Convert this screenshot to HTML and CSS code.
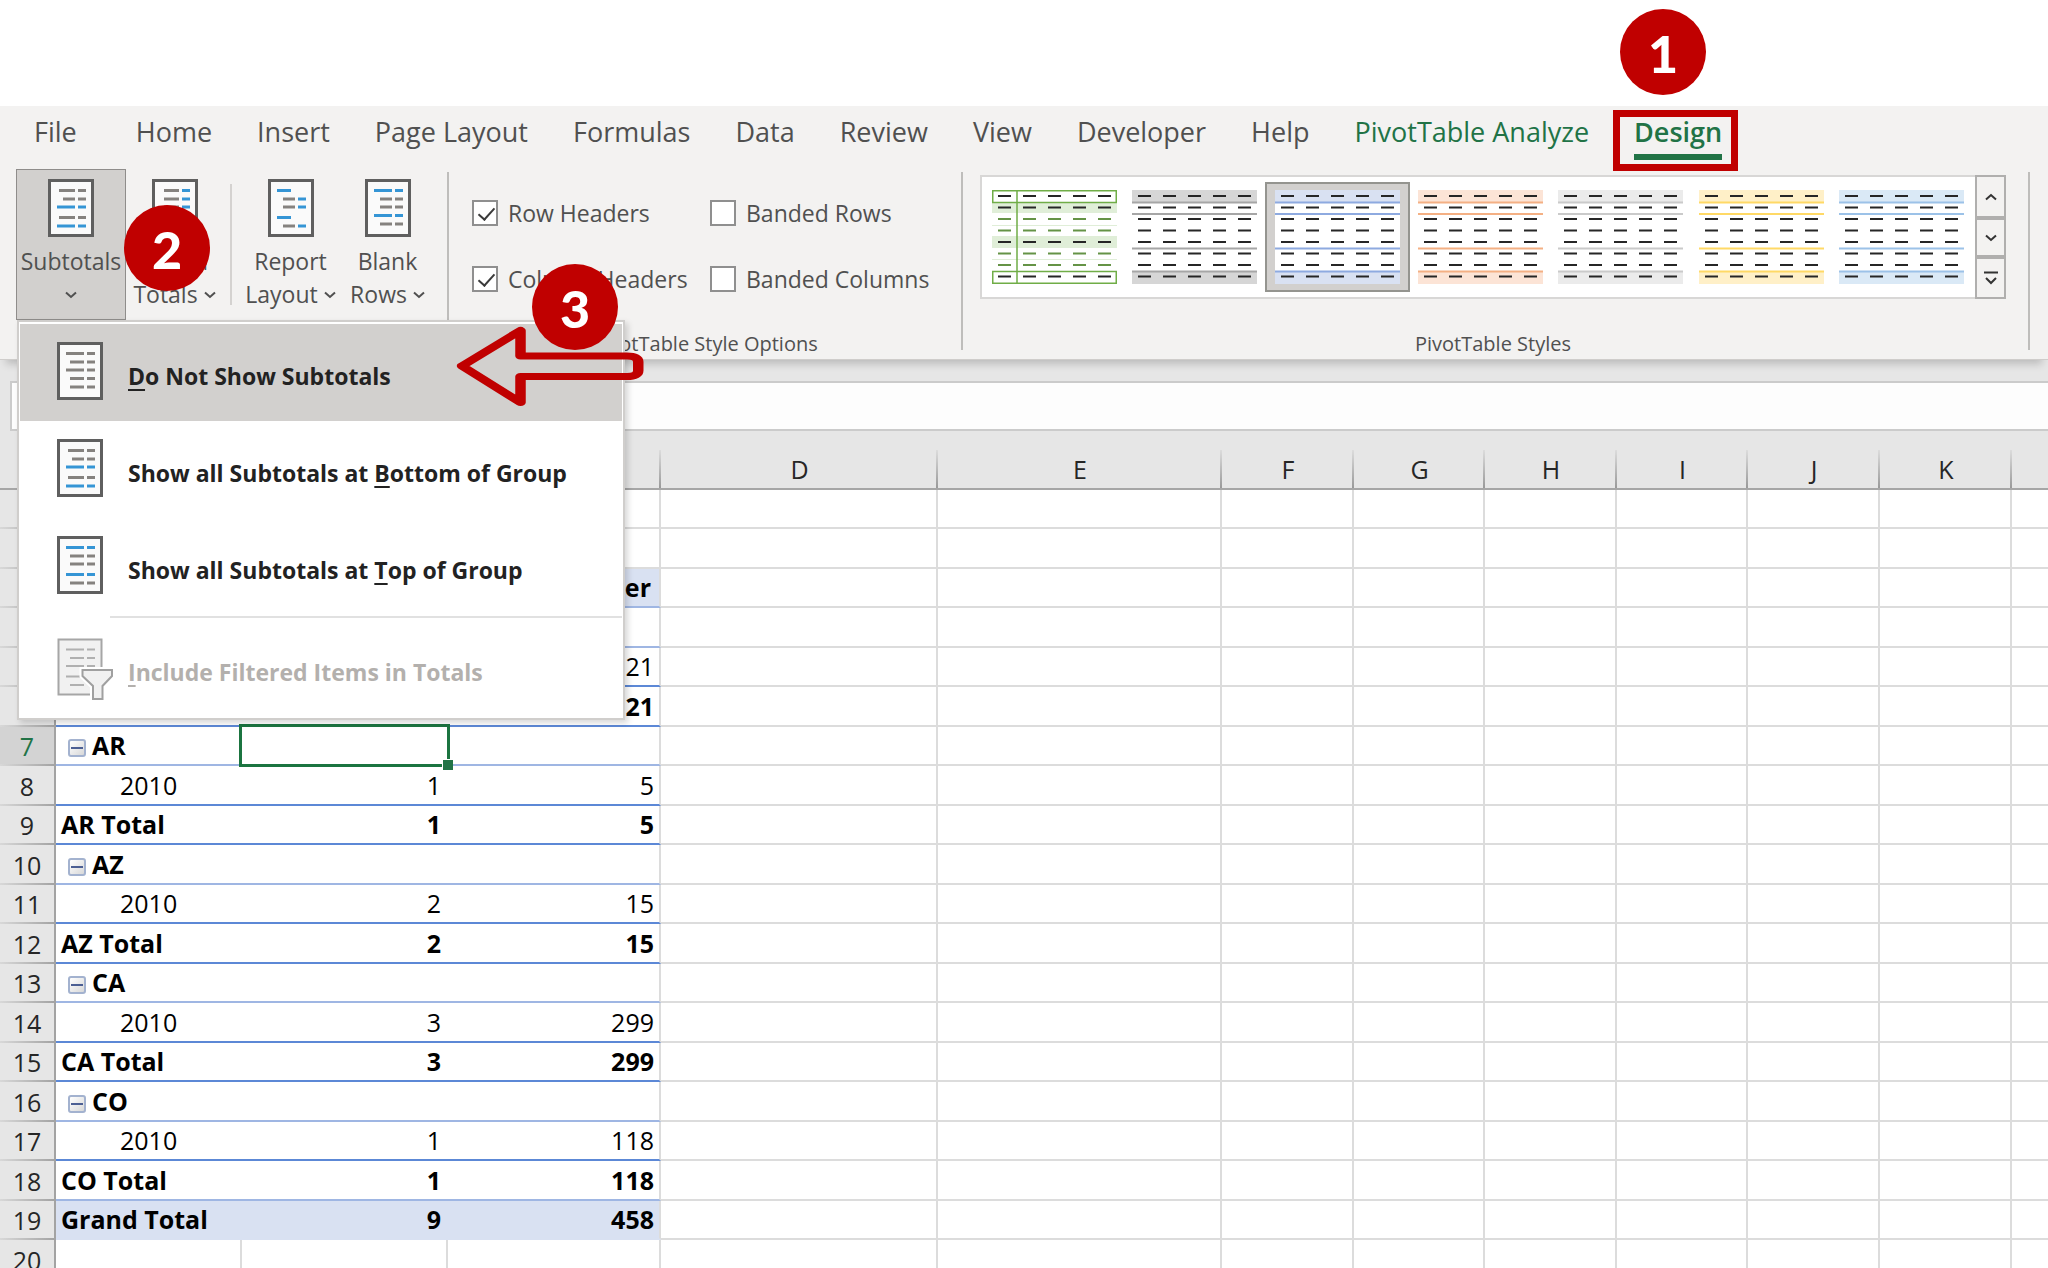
FILE: index.html
```html
<!DOCTYPE html>
<html lang="en">
<head>
<meta charset="utf-8">
<meta name="viewport" content="width=device-width, initial-scale=1">
<title>PivotTable subtotals</title>
<link rel="stylesheet" href="styles.css">
</head>
<body>
<svg class="defs" aria-hidden="true">
  <symbol id="sheet" viewBox="0 0 46 58">
    <rect class="paper" x="1.5" y="1.5" width="43" height="55"/>
  </symbol>
  <symbol id="bottom" viewBox="0 0 46 58">
    <use href="#sheet"/>
    <path class="ink" d="M11 11.500H27M30 11.500H38M15 20H27M30 20H38M11 38.500H27M30 38.500H38"/>
    <path class="blue" d="M9 28H27M30 28H38M9 47H27M30 47H38"/>
  </symbol>
  <symbol id="top" viewBox="0 0 46 58">
    <use href="#sheet"/>
    <path class="ink" d="M13 20H27M30 20H38M13 28H27M30 28H38M13 47H27M30 47H38"/>
    <path class="blue" d="M9 11.500H27M30 11.500H38M9 38.500H27M30 38.500H38"/>
  </symbol>
  <symbol id="none" viewBox="0 0 46 58">
    <use href="#sheet"/>
    <path class="ink" d="M9 11.500H27M30 11.500H38M13 20H27M30 20H38M9 28H27M30 28H38M13 36.500H27M30 36.500H38M13 45H27M30 45H38"/>
  </symbol>
  <symbol id="grand" viewBox="0 0 46 58">
    <use href="#sheet"/>
    <path class="ink" d="M12 11.500H27M12 20H27M12 28H27M12 36.500H27"/>
    <path class="blue" d="M30 11.500H38M30 20H38M30 28H38M30 36.500H38M9 47H38"/>
  </symbol>
  <symbol id="report" viewBox="0 0 46 58">
    <use href="#sheet"/>
    <path class="ink" d="M15 20H27M15 28H27M15 47H27"/>
    <path class="blue" d="M9 11.500H23M30 20H38M30 28H38M9 38.500H23M30 47H38"/>
  </symbol>
  <symbol id="blank" viewBox="0 0 46 58">
    <use href="#sheet"/>
    <path class="ink" d="M15 20H27M30 20H38M15 28H27M30 28H38M15 45H27M30 45H38"/>
    <path class="blue" d="M9 11.500H27M30 11.500H38M9 36.500H27M30 36.500H38"/>
  </symbol>
  <symbol id="filter" viewBox="0 0 56 62">
    <rect x="1.500" y="1.500" width="43" height="55" fill="#f1f1f1" stroke="#a6a6a6" stroke-width="2"/>
    <path d="M9 11.500H27M30 11.500H38M13 20H27M30 20H38M9 28H27M30 28H38M9 38.500H25M13 47H27" stroke="#b0b0b0" stroke-width="2"/>
    <path d="M25.500 32H55V38L45.500 48V61.500H36V48L25.500 38Z" fill="#f1f1f1" stroke="#fff" stroke-width="6"/>
    <path d="M25.500 32H55V38L45.500 48V61H36V48L25.500 38Z" fill="#f1f1f1" stroke="#a0a0a0" stroke-width="2"/>
  </symbol>
  <symbol id="down" viewBox="0 0 12 8"><path d="M1 1.500L6 6L11 1.500" fill="none" stroke="currentColor" stroke-width="2"/></symbol>
  <symbol id="up" viewBox="0 0 12 8"><path d="M1 6.500L6 2L11 6.500" fill="none" stroke="currentColor" stroke-width="2"/></symbol>
  <symbol id="more" viewBox="0 0 14 14"><path d="M0 1.500H14M2 7L7 12L12 7" fill="none" stroke="currentColor" stroke-width="2"/></symbol>
  <symbol id="style" viewBox="0 0 125 94">
    <rect width="125" height="94" fill="#fff"/>
    <path class="band" d="M0 0H125V12H0ZM0 82H125V94H0Z"/>
    <path class="rule" d="M0 12.500H125M0 24H125M0 58.500H125M0 81.500H125"/>
    <path class="dash" d="M6 6H125M6 17.500H125M6 29H125M6 40.500H125M6 52H125M6 63.500H125M6 75H125M6 86.500H125"/>
  </symbol>
  <symbol id="style-green" viewBox="0 0 125 94">
    <path d="M0 13H125V23H0ZM0 46H125V58H0ZM0 35H125V36H0ZM0 69H125V70H0Z" fill="#e0eed8"/>
    <path d="M.75 .75H124.250V12.500H.75ZM.75 81.500H124.250V93.250H.75ZM25 1V93" fill="none" stroke="#70ad47" stroke-width="1.500"/>
    <path class="dash" d="M6 6H125M6 17.500H125M6 52H125M6 86.500H125"/>
    <path class="dash dash-green" d="M6 29H125M6 40.500H125M6 63.500H125M6 75H125"/>
  </symbol>
</svg>

<div class="window">
  <header class="ribbon">
    <nav class="tabs" role="tablist" aria-label="Ribbon">
      <button class="tab tab-file" role="tab">File</button>
      <button class="tab" role="tab">Home</button>
      <button class="tab" role="tab">Insert</button>
      <button class="tab" role="tab">Page Layout</button>
      <button class="tab" role="tab">Formulas</button>
      <button class="tab" role="tab">Data</button>
      <button class="tab" role="tab">Review</button>
      <button class="tab" role="tab">View</button>
      <button class="tab" role="tab">Developer</button>
      <button class="tab" role="tab">Help</button>
      <button class="tab tab-context" role="tab">PivotTable Analyze</button>
      <button class="tab tab-context tab-active" role="tab" aria-selected="true">Design</button>
    </nav>

    <div class="groups">
      <section class="group layout-group">
        <div class="menu-anchor">
          <button class="tool tool-open" aria-expanded="true" aria-haspopup="menu">
            <svg class="page-icon"><use href="#bottom"/></svg>
            <span>Subtotals<br><svg class="chevron"><use href="#down"/></svg></span>
          </button>
          <div class="menu" role="menu">
            <button class="item item-hover" role="menuitem"><svg class="page-icon"><use href="#none"/></svg><span><u>D</u>o Not Show Subtotals</span></button>
            <button class="item" role="menuitem"><svg class="page-icon"><use href="#bottom"/></svg><span>Show all Subtotals at <u>B</u>ottom of Group</span></button>
            <button class="item" role="menuitem"><svg class="page-icon"><use href="#top"/></svg><span>Show all Subtotals at <u>T</u>op of Group</span></button>
            <hr class="menu-rule">
            <button class="item item-last" role="menuitem" disabled><svg class="filter-icon"><use href="#filter"/></svg><span><u>I</u>nclude Filtered Items in Totals</span></button>
          </div>
        </div>
        <button class="tool"><svg class="page-icon"><use href="#grand"/></svg><span>Grand<br>Totals <svg class="chevron"><use href="#down"/></svg></span></button>
        <div class="short-rule"></div>
        <button class="tool"><svg class="page-icon"><use href="#report"/></svg><span>Report<br>Layout <svg class="chevron"><use href="#down"/></svg></span></button>
        <button class="tool"><svg class="page-icon"><use href="#blank"/></svg><span>Blank<br>Rows <svg class="chevron"><use href="#down"/></svg></span></button>
      </section>
      <div class="divider"></div>
      <section class="group options-group">
        <div class="options">
          <label class="option"><input type="checkbox" checked>Row Headers</label>
          <label class="option"><input type="checkbox">Banded Rows</label>
          <label class="option"><input type="checkbox" checked>Column Headers</label>
          <label class="option"><input type="checkbox">Banded Columns</label>
        </div>
        <p class="group-name">PivotTable Style Options</p>
      </section>
      <div class="divider"></div>
      <section class="group styles-group">
        <div class="gallery">
          <button class="swatch" aria-label="Green style"><svg><use href="#style-green"/></svg></button>
          <button class="swatch dark" aria-label="Dark gray style"><svg><use href="#style"/></svg></button>
          <button class="swatch blue-style chosen" aria-label="Blue style"><svg><use href="#style"/></svg></button>
          <button class="swatch orange" aria-label="Orange style"><svg><use href="#style"/></svg></button>
          <button class="swatch light" aria-label="Light gray style"><svg><use href="#style"/></svg></button>
          <button class="swatch yellow" aria-label="Yellow style"><svg><use href="#style"/></svg></button>
          <button class="swatch sky" aria-label="Light blue style"><svg><use href="#style"/></svg></button>
          <div class="scroller">
            <button aria-label="Previous styles"><svg class="chevron"><use href="#up"/></svg></button>
            <button aria-label="Next styles"><svg class="chevron"><use href="#down"/></svg></button>
            <button aria-label="More styles"><svg class="more"><use href="#more"/></svg></button>
          </div>
        </div>
        <p class="group-name">PivotTable Styles</p>
      </section>
      <div class="divider"></div>
    </div>
  </header>

  <div class="formula-row"><input class="formula" type="text" aria-label="Formula bar"></div>

  <main class="sheet">
    <table class="grid">
      <colgroup>
        <col class="c-num"><col class="c-a"><col class="c-b"><col class="c-c"><col class="c-d"><col class="c-e">
        <col class="c-f"><col class="c-g"><col class="c-f"><col class="c-g"><col class="c-f"><col class="c-f"><col>
      </colgroup>
      <thead>
        <tr><th></th><th></th><th></th><th></th><th>D</th><th>E</th><th>F</th><th>G</th><th>H</th><th>I</th><th>J</th><th>K</th><th></th></tr>
      </thead>
      <tbody>
        <tr><th></th><td></td><td></td><td></td><td></td><td></td><td></td><td></td><td></td><td></td><td></td><td></td><td></td></tr>
        <tr><th></th><td></td><td></td><td></td><td></td><td></td><td></td><td></td><td></td><td></td><td></td><td></td><td></td></tr>
        <tr class="pivot total shade thin"><th></th><td></td><td></td><td class="caption">Number</td><td></td><td></td><td></td><td></td><td></td><td></td><td></td><td></td><td></td></tr>
        <tr class="pivot thin"><th></th><td></td><td></td><td></td><td></td><td></td><td></td><td></td><td></td><td></td><td></td><td></td><td></td></tr>
        <tr class="pivot"><th></th><td></td><td></td><td>21</td><td></td><td></td><td></td><td></td><td></td><td></td><td></td><td></td><td></td></tr>
        <tr class="pivot total"><th></th><td></td><td></td><td>21</td><td></td><td></td><td></td><td></td><td></td><td></td><td></td><td></td><td></td></tr>
        <tr class="pivot total thin current"><th>7</th><td><button class="fold" aria-label="Collapse AR"></button>AR</td><td class="selected"></td><td></td><td></td><td></td><td></td><td></td><td></td><td></td><td></td><td></td><td></td></tr>
        <tr class="pivot year"><th>8</th><td>2010</td><td>1</td><td>5</td><td></td><td></td><td></td><td></td><td></td><td></td><td></td><td></td><td></td></tr>
        <tr class="pivot total"><th>9</th><td>AR Total</td><td>1</td><td>5</td><td></td><td></td><td></td><td></td><td></td><td></td><td></td><td></td><td></td></tr>
        <tr class="pivot total thin"><th>10</th><td><button class="fold" aria-label="Collapse AZ"></button>AZ</td><td></td><td></td><td></td><td></td><td></td><td></td><td></td><td></td><td></td><td></td><td></td></tr>
        <tr class="pivot year"><th>11</th><td>2010</td><td>2</td><td>15</td><td></td><td></td><td></td><td></td><td></td><td></td><td></td><td></td><td></td></tr>
        <tr class="pivot total"><th>12</th><td>AZ Total</td><td>2</td><td>15</td><td></td><td></td><td></td><td></td><td></td><td></td><td></td><td></td><td></td></tr>
        <tr class="pivot total thin"><th>13</th><td><button class="fold" aria-label="Collapse CA"></button>CA</td><td></td><td></td><td></td><td></td><td></td><td></td><td></td><td></td><td></td><td></td><td></td></tr>
        <tr class="pivot year"><th>14</th><td>2010</td><td>3</td><td>299</td><td></td><td></td><td></td><td></td><td></td><td></td><td></td><td></td><td></td></tr>
        <tr class="pivot total"><th>15</th><td>CA Total</td><td>3</td><td>299</td><td></td><td></td><td></td><td></td><td></td><td></td><td></td><td></td><td></td></tr>
        <tr class="pivot total thin"><th>16</th><td><button class="fold" aria-label="Collapse CO"></button>CO</td><td></td><td></td><td></td><td></td><td></td><td></td><td></td><td></td><td></td><td></td><td></td></tr>
        <tr class="pivot year"><th>17</th><td>2010</td><td>1</td><td>118</td><td></td><td></td><td></td><td></td><td></td><td></td><td></td><td></td><td></td></tr>
        <tr class="pivot total thin"><th>18</th><td>CO Total</td><td>1</td><td>118</td><td></td><td></td><td></td><td></td><td></td><td></td><td></td><td></td><td></td></tr>
        <tr class="pivot total shade last"><th>19</th><td>Grand Total</td><td>9</td><td>458</td><td></td><td></td><td></td><td></td><td></td><td></td><td></td><td></td><td></td></tr>
        <tr><th>20</th><td></td><td></td><td></td><td></td><td></td><td></td><td></td><td></td><td></td><td></td><td></td><td></td></tr>
      </tbody>
    </table>
  </main>

  <div class="frame"></div>
  <div class="step step-1">1</div>
  <div class="step step-2">2</div>
  <div class="step step-3">3</div>
  <svg class="arrow" viewBox="0 0 188 81" aria-hidden="true">
    <path transform="scale(1.5 1)" d="M4 40L43 4.500V30H114Q121.500 30 121.500 36V44.500Q121.500 50.500 114 50.500H43V76.500Z" fill="none" stroke="#c00000" stroke-width="7" stroke-linejoin="round"/>
  </svg>
</div>
</body>
</html>
```
FILE: styles.css
```css
* { box-sizing: border-box; }

body {
  margin: 0;
  background: #fff;
  color: #505050;
  font-family: "Open Sans", "Noto Sans", sans-serif;
  font-size: 23px;
}

button, input { font: inherit; color: inherit; }
button { margin: 0; padding: 0; border: 0; background: none; }
p { margin: 0; }
.defs { position: absolute; width: 0; height: 0; }

.window {
  position: relative;
  display: flex;
  flex-direction: column;
  height: 100vh;
  padding-top: 106px;
  overflow: hidden;
}

/* Ribbon */
.ribbon {
  position: relative;
  z-index: 2;
  flex: none;
  background: #f3f2f1;
  border-bottom: 1px solid #cfcdcb;
  box-shadow: 0 10px 8px -6px #00000030;
}
.tabs { display: flex; gap: 45px; padding-left: 34px; }
.tab { position: relative; padding-bottom: 2px; font-size: 27px; line-height: 52px; white-space: nowrap; }
.tab-file { margin-right: 14px; }
.tab-context { color: #217346; }
.tab-active { font-weight: 600; }
.tab-active::after {
  content: "";
  position: absolute;
  inset: auto 0 0;
  height: 6px;
  background: #217346;
}

.groups { display: flex; margin-top: 9px; height: 190px; }
.group { display: flex; flex-direction: column; }
.divider { width: 2px; margin: 3px 0 9px; background: #bebdbb; }
.group-name { margin-top: auto; font-size: 20px; line-height: 30px; text-align: center; }

.layout-group { flex-direction: row; align-items: flex-start; width: 447px; padding-left: 16px; }
.tool {
  display: flex;
  flex-direction: column;
  align-items: center;
  gap: 8px;
  width: 97px;
  height: 151px;
  padding-top: 9px;
  border: 1px solid transparent;
  line-height: 33px;
  white-space: nowrap;
}
.tool-open { width: 110px; background: #d2d0ce; border-color: #8f8d8b; }
.page-icon { flex: none; width: 46px; height: 58px; }
.chevron { width: 12px; height: 8px; vertical-align: 4px; }
.short-rule { width: 2px; height: 121px; margin: 15px 10px 0 7px; background: #d4d2d0; }
.paper { fill: #fafafa; stroke: #5f5f5f; stroke-width: 3; }
.ink, .blue { fill: none; stroke: #85827f; stroke-width: 3; }
.blue { stroke: #3595d5; }

.options-group { width: 512px; }
.options { display: grid; grid-template-columns: 238px 1fr; padding: 11px 0 0 23px; }
.option { display: flex; align-items: center; gap: 10px; height: 66px; white-space: nowrap; }
.option input {
  position: relative;
  flex: none;
  appearance: none;
  width: 26px;
  height: 26px;
  margin: 0;
  background: #fff;
  border: 2px solid #8f8f8f;
}
.option input:checked::after {
  content: "";
  position: absolute;
  left: 8px;
  top: 2px;
  width: 7px;
  height: 14px;
  border: solid #3a3a3a;
  border-width: 0 2px 2px 0;
  rotate: 42deg;
}

.styles-group { flex: 1; padding: 6px 22px 0 17px; }
.styles-group + .divider { margin-right: 18px; }
.gallery { display: flex; height: 124px; padding-left: 2px; background: #fff; border: 2px solid #d8d7d6; border-right: 0; }
.swatch { flex: 1; display: flex; align-items: center; justify-content: center; margin: 5px 0; }
.swatch svg { width: 125px; height: 94px; }
.chosen { background: #d2d0ce; border: 2px solid #94948f; }
.band { fill: var(--band); }
.rule { fill: none; stroke: var(--rule); stroke-width: 2; }
.dash { fill: none; stroke: #262626; stroke-width: 2; stroke-dasharray: 13 12; }
.dash-green { stroke: #659346; }
.dark { --band: #d6d6d6; --rule: #a6a6a6; }
.blue-style { --band: #d9e1f2; --rule: #8eaae0; }
.orange { --band: #fce4d6; --rule: #f4b084; }
.light { --band: #ebebeb; --rule: #cacaca; }
.yellow { --band: #fff0c8; --rule: #ffd966; }
.sky { --band: #dae9f6; --rule: #9cc2e8; }
.scroller { display: grid; grid-template-rows: 43px 39px 1fr; width: 31px; margin: -2px 0 -2px 3px; }
.scroller button {
  display: grid;
  place-items: center;
  background: #f3f2f1;
  border: 2px solid #b0afae;
  color: #333;
}
.more { width: 14px; height: 14px; }

/* Drop-down menu */
.menu-anchor { position: relative; }
.menu {
  position: absolute;
  left: 1px;
  top: 151px;
  width: 608px;
  padding: 2px 1px 1px;
  background: #fff;
  border: 2px solid #d0cecc;
  box-shadow: 3px 3px 6px #00000028;
  color: #222;
  font-weight: 700;
}
.item {
  display: flex;
  align-items: flex-start;
  width: 100%;
  height: 97px;
  padding: 18px 0 0 37px;
  gap: 25px;
  text-align: left;
  white-space: nowrap;
  line-height: 68px;
}
.item-hover { background: #d2d0ce; }
.item-last { height: 99px; padding-top: 20px; gap: 15px; color: #b3b0ad; }
.filter-icon { flex: none; width: 56px; height: 62px; }
.menu-rule { height: 2px; margin: 1px 0 0 90px; border: 0; background: #e1e1e1; }
.item u { text-decoration-thickness: 2px; text-underline-offset: 4px; }

/* Formula bar */
.formula-row { flex: none; padding: 21px 0 0 10px; background: #e6e6e6; }
.formula {
  display: block;
  width: 100%;
  height: 50px;
  border: 2px solid #cbcbcb;
  border-right: 0;
  background: #fdfdfd;
}

/* Worksheet */
.sheet { flex: 1; min-height: 0; }
.grid {
  width: 100%;
  table-layout: fixed;
  border-collapse: separate;
  border-spacing: 0;
  color: #000;
  font-size: 25px;
}
.c-num { width: 56px; }
.c-a { width: 186px; }
.c-b { width: 206px; }
.c-c { width: 213px; }
.c-d { width: 277px; }
.c-e { width: 284px; }
.c-f { width: 132px; }
.c-g { width: 131px; }
.grid th {
  padding: 0;
  background: linear-gradient(to right, #d8d8d8, #a3a3a3) bottom / 100% 2px no-repeat #e6e6e6;
  color: #262626;
  font-weight: 400;
}
.grid thead th {
  height: 59px;
  padding-top: 19px;
  line-height: 38px;
  border-bottom: 2px solid #a6a6a6;
  background: linear-gradient(to bottom, #dcdcdc, #999) right bottom / 2px 38px no-repeat #e6e6e6;
}
.grid tbody th { border-right: 2px solid #a3a3a3; }
.grid tbody tr { height: 39px; line-height: 37px; }
.grid tbody tr:nth-child(even) { height: 40px; }
.grid td {
  padding: 0 5px;
  border-right: 2px solid #dcdcdc;
  border-bottom: 2px solid #dcdcdc;
  text-align: right;
  white-space: nowrap;
}
.grid td:nth-child(2) { text-align: left; }
.grid td:last-child { border-right: 0; }
.grid th:last-child { background-image: none; }
.grid tbody th { background-image: linear-gradient(to right, #d8d8d8, #a3a3a3); }
.pivot td:nth-child(-n+4) { border-bottom-color: #5c88d6; }
.pivot td:nth-child(-n+3) { padding-right: 7px; border-right: 0; }
.thin td:nth-child(-n+4) { border-bottom-color: #9fb6e3; }
.total td { font-weight: 700; }
.shade td:nth-child(-n+4) { background: #d9e1f2; }
.last td:nth-child(-n+4) { border-bottom-color: #d9e1f2; }
.grid .caption { padding-right: 8px; }
.year td:nth-child(2) { padding-left: 64px; }
.current th { border-right: 3px solid #217346; background-color: #d3d3d3; color: #217346; }
.fold {
  position: relative;
  width: 18px;
  height: 18px;
  margin: 0 6px 0 7px;
  vertical-align: 0;
  background: linear-gradient(135deg, #fff, #d8d8d8);
  border: 2px solid #a3b2cf;
  border-radius: 3px;
}
.fold::after { content: ""; position: absolute; inset: 6px 1px; background: #4c5f93; }
.selected { position: relative; }
.selected::before {
  content: "";
  position: absolute;
  inset: -3px -2px -3px -3px;
  border: 3px solid #1b7440;
}
.selected::after {
  content: "";
  position: absolute;
  right: -5px;
  bottom: -6px;
  width: 10px;
  height: 10px;
  background: #217346;
  border: solid #fff;
  border-width: 1px 0 0 1px;
}

/* Step marks over the window */
.step, .frame, .arrow { position: absolute; z-index: 3; }
.step {
  width: 86px;
  height: 86px;
  border-radius: 50%;
  background: #c00000;
  color: #fff;
  font-family: Lato, "Open Sans", sans-serif;
  font-size: 52px;
  font-weight: 900;
  line-height: 88px;
  text-align: center;
}
.step-1 { left: 1620px; top: 9px; }
.step-2 { left: 124px; top: 205px; }
.step-3 { left: 532px; top: 264px; }
.frame { left: 1613px; top: 110px; width: 125px; height: 61px; border: 7px solid #c00000; }
.arrow { left: 456px; top: 326px; width: 188px; height: 81px; }
```
